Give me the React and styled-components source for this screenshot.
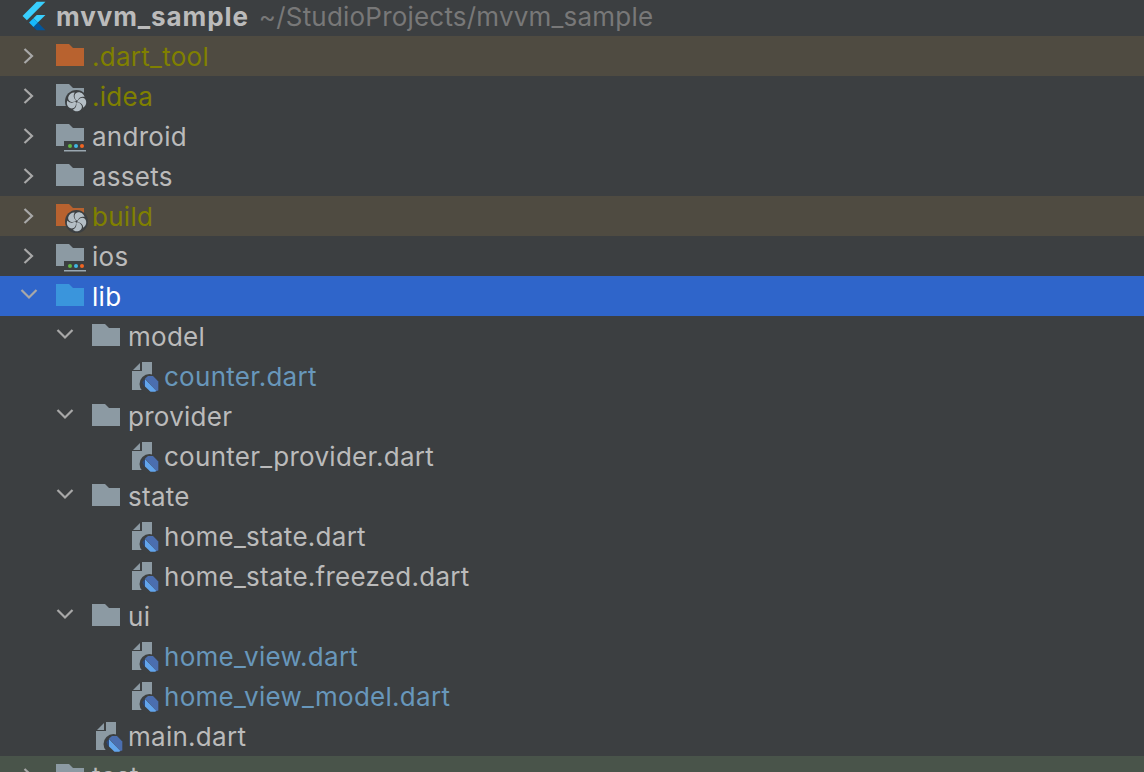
import React from 'react';
import styled, { createGlobalStyle } from 'styled-components';

const Global = createGlobalStyle`
  html, body { margin: 0; padding: 0; background: #3c3f41; }
  #root { height: 772px; overflow: hidden; }
`;

const Tree = styled.div`
  width: 1144px;
  height: 772px;
  overflow: hidden;
  background: #3c3f41;
  font-family: Inter, "Liberation Sans", sans-serif;
  font-size: 26px;
  letter-spacing: 0.27px;
  color: #bbbbbb;
`;

const List = styled.ul`
  list-style: none;
  margin: -4px 0 0;
  padding: 0;
`;

const bgs = { ignored: '#4f4b41', selected: '#2f65ca', tool: '#49544a', none: 'transparent' };

const Row = styled.li`
  display: flex;
  align-items: center;
  height: 40px;
  box-sizing: border-box;
  padding-left: ${p => 16 + 36 * p.$depth}px;
  background: ${p => bgs[p.$bg || 'none']};
`;

const RootRow = styled.li`
  display: flex;
  align-items: center;
  height: 40px;
  padding-left: 21px;
`;

const RootName = styled.span`
  margin-left: 9px;
  padding-top: 1px;
  font-weight: 700;
  letter-spacing: 0.9px;
  color: #bbbbbb;
  white-space: nowrap;
`;

const RootPath = styled.span`
  margin-left: 10px;
  padding-top: 1px;
  letter-spacing: 0.2px;
  color: #787878;
  white-space: nowrap;
`;

const ChevronBox = styled.span`
  flex: 0 0 36px;
  width: 36px;
  height: 36px;
  display: block;
`;

const IconBox = styled.svg`
  flex: 0 0 36px;
  width: 36px;
  height: 36px;
  display: block;
`;

const colors = { normal: '#bbbbbb', ignored: '#808000', changed: '#6897bb', selected: '#ffffff' };

const Label = styled.span`
  margin-left: 4px;
  padding-top: 1px;
  color: ${p => colors[p.$tone || 'normal']};
  white-space: nowrap;
`;

const Chevron = ({ open }) => (
  <ChevronBox>
    <svg width="36" height="36" viewBox="0 0 36 36" fill="none" stroke="#a8a8a8" strokeWidth="2.2">
      {open ? <path d="M5.5 12 L13 19.5 L20.5 12" /> : <path d="M8.5 11 L16 18 L8.5 25" />}
    </svg>
  </ChevronBox>
);

const folderPath = 'M4 6 H17 L21 10 H32 V28 H4 Z';

const FanBadge = () => (
  <g>
    <circle cx="24.5" cy="23.5" r="11.5" fill="#3c3f41" />
    {[0, 72, 144, 216, 288].map(a => (
      <path
        key={a}
        d="M24.5 22.5 C21.5 19.5 22 15 26 14.3 C29.5 14 32 16.5 32.5 19 C29.5 18.2 26.8 19.5 25.6 22.6 Z"
        fill="#b4bec5"
        transform={`rotate(${a} 24.5 23.5)`}
      />
    ))}
  </g>
);

const ModuleBadge = () => (
  <g>
    <rect x="12" y="23" width="22" height="10" fill="#3c3f41" />
    <circle cx="18" cy="28" r="2" fill="#62b543" />
    <circle cx="24" cy="28" r="2" fill="#40b6e0" />
    <circle cx="30" cy="28" r="2" fill="#f26522" />
    <rect x="12" y="32" width="22" height="1.5" fill="#9aa7b0" />
  </g>
);

const Folder = ({ color = '#8c9aa3', badge }) => (
  <IconBox viewBox="0 0 36 36">
    <path d={folderPath} fill={color} />
    {badge === 'fan' && <FanBadge />}
    {badge === 'module' && <ModuleBadge />}
  </IconBox>
);

const DartFile = () => (
  <IconBox viewBox="0 0 36 36">
    <path d="M18 4 H28 V32 H8 V13 H18 Z" fill="#8c9aa3" />
    <path d="M16 5 V12 H9 Z" fill="#8c9aa3" />
    <circle cx="25.5" cy="26" r="10" fill="#3c3f41" />
    <path d="M18.3 24 L21 21 V28.5 L19.5 27 Z" fill="#2f4a7a" />
    <path d="M21 20.5 L24 18 H29 L34.3 23.5 V32.5 L32.5 33 Z" fill="#4b6eaf" />
    <path d="M21 21 L32.5 33 L31 33.7 H26.5 L21 28.5 Z" fill="#62a5ec" />
  </IconBox>
);

const FlutterLogo = () => (
  <svg width="26" height="32" viewBox="0 0 166 202">
    <polygon fill="#39CEFD" points="37.7 128.9 9.8 101 100.4 10.4 156.2 10.4" />
    <polygon fill="#39CEFD" points="156.2 94 100.4 94 79.5 114.9 107.4 142.8" />
    <polygon fill="#03569B" points="79.5 170.7 100.4 191.6 156.2 191.6 107.4 142.8" />
    <polygon fill="#16B9FD" points="51.6 142.8 79.5 114.9 107.4 142.8 79.5 170.7" />
  </svg>
);

const FolderRow = ({ name, depth = 0, open, bg, tone, color, badge }) => (
  <Row $depth={depth} $bg={bg}>
    <Chevron open={open} />
    <Folder color={color} badge={badge} />
    <Label $tone={tone}>{name}</Label>
  </Row>
);

const FileRow = ({ name, depth, tone }) => (
  <Row $depth={depth}>
    <ChevronBox />
    <DartFile />
    <Label $tone={tone}>{name}</Label>
  </Row>
);

export default function App() {
  return (
    <Tree>
      <Global />
      <List>
        <RootRow>
          <FlutterLogo />
          <RootName>mvvm_sample</RootName>
          <RootPath>~/StudioProjects/mvvm_sample</RootPath>
        </RootRow>
        <FolderRow name=".dart_tool" bg="ignored" tone="ignored" color="#b8622f" />
        <FolderRow name=".idea" tone="ignored" badge="fan" />
        <FolderRow name="android" badge="module" />
        <FolderRow name="assets" />
        <FolderRow name="build" bg="ignored" tone="ignored" color="#b8622f" badge="fan" />
        <FolderRow name="ios" badge="module" />
        <FolderRow name="lib" open bg="selected" tone="selected" color="#3a95dc" />
        <FolderRow name="model" depth={1} open />
        <FileRow name="counter.dart" depth={2} tone="changed" />
        <FolderRow name="provider" depth={1} open />
        <FileRow name="counter_provider.dart" depth={2} />
        <FolderRow name="state" depth={1} open />
        <FileRow name="home_state.dart" depth={2} />
        <FileRow name="home_state.freezed.dart" depth={2} />
        <FolderRow name="ui" depth={1} open />
        <FileRow name="home_view.dart" depth={2} tone="changed" />
        <FileRow name="home_view_model.dart" depth={2} tone="changed" />
        <FileRow name="main.dart" depth={1} />
        <FolderRow name="test" bg="tool" />
      </List>
    </Tree>
  );
}
